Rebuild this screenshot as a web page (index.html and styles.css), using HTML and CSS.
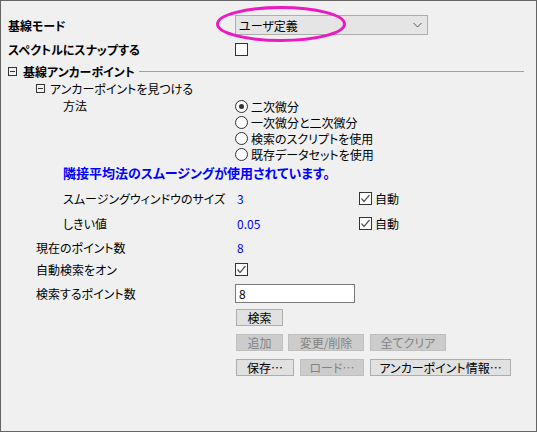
FILE: index.html
```html
<!DOCTYPE html>
<html lang="ja">
<head>
    <meta charset="UTF-8">
    <title>基線モード</title>
    <link rel="stylesheet" href="styles.css">
</head>
<body>
<div class="panel">
    <svg class="mark" width="140" height="44" viewBox="0 0 140 44">
        <ellipse cx="66" cy="20" rx="63.5" ry="16.5" fill="none" stroke="#ec1bc0" stroke-width="3"/>
    </svg>

    <div class="row r1">
        <div class="label bold">基線モード</div>
        <div class="val">
            <div class="combo">
                <span>ユーザ定義</span>
                <svg width="9" height="6" viewBox="0 0 9 6"><polyline points="0.5,1 4.5,5 8.5,1" fill="none" stroke="#555" stroke-width="1"/></svg>
            </div>
        </div>
    </div>
    <div class="row r2">
        <div class="label bold">スペクトルにスナップする</div>
        <div class="val"><span class="check"></span></div>
    </div>

    <div class="section">
        <span class="minus"></span>
        <span class="bold">基線アンカーポイント</span>
        <span class="rule"></span>
    </div>
    <div class="sub">
        <span class="minus"></span>
        <span>アンカーポイントを見つける</span>
    </div>

    <div class="row methods">
        <div class="label l2">方法</div>
        <div class="val radios">
            <div class="opt"><span class="radio on"></span>二次微分</div>
            <div class="opt"><span class="radio"></span>一次微分と二次微分</div>
            <div class="opt"><span class="radio"></span>検索のスクリプトを使用</div>
            <div class="opt"><span class="radio"></span>既存データセットを使用</div>
        </div>
    </div>

    <div class="note">隣接平均法のスムージングが使用されています。</div>

    <div class="row r-smooth">
        <div class="label l2">スムージングウィンドウのサイズ</div>
        <div class="val"><span class="num">3</span><span class="check on"><svg width="11" height="11" viewBox="0 0 11 11"><polyline points="1.5,5.5 4,8.5 9.5,2" fill="none" stroke="#555" stroke-width="1.2"/></svg></span><span class="auto">自動</span></div>
    </div>
    <div class="row r-thresh">
        <div class="label l2">しきい値</div>
        <div class="val"><span class="num">0.05</span><span class="check on"><svg width="11" height="11" viewBox="0 0 11 11"><polyline points="1.5,5.5 4,8.5 9.5,2" fill="none" stroke="#555" stroke-width="1.2"/></svg></span><span class="auto">自動</span></div>
    </div>
    <div class="row r-count">
        <div class="label l1">現在のポイント数</div>
        <div class="val"><span class="num">8</span></div>
    </div>
    <div class="row r-auto">
        <div class="label l1">自動検索をオン</div>
        <div class="val"><span class="check on"><svg width="11" height="11" viewBox="0 0 11 11"><polyline points="1.5,5.5 4,8.5 9.5,2" fill="none" stroke="#555" stroke-width="1.2"/></svg></span></div>
    </div>
    <div class="row r-find">
        <div class="label l1">検索するポイント数</div>
        <div class="val"><div class="field">8</div></div>
    </div>

    <div class="buttons">
        <div class="btnrow"><span class="btn w47">検索</span></div>
        <div class="btnrow">
            <span class="btn w47 off">追加</span>
            <span class="btn w76 off gap5">変更/削除</span>
            <span class="btn w76 off">全てクリア</span>
        </div>
        <div class="btnrow">
            <span class="btn w58">保存…</span>
            <span class="btn w64 off">ロード…</span>
            <span class="btn w141">アンカーポイント情報…</span>
        </div>
    </div>
</div>
</body>
</html>
```

FILE: styles.css
```css
body {
    margin: 0;
    padding: 0;
    font-family: "Noto Sans CJK JP", "Noto Sans", sans-serif;
    font-size: 12px;
    font-feature-settings: "palt";
    color: #000;
    background: #f0f0f0;
}
.panel {
    position: relative;
    width: 537px;
    height: 432px;
    box-sizing: border-box;
    border: 1px solid #646464;
    background: #f0f0f0;
    padding: 12px 12px 0 7px;
}
.mark {
    position: absolute;
    left: 214px;
    top: 3px;
}
.bold {
    font-weight: bold;
}
.row {
    display: grid;
    grid-template-columns: 227px 1fr;
    align-items: center;
}
.val {
    display: flex;
    align-items: center;
}
.l1 {
    padding-left: 28px;
}
.l2 {
    padding-left: 55px;
}
.r1 { height: 24px; }
.r2 { height: 24px; }
.combo {
    width: 193px;
    height: 20px;
    box-sizing: border-box;
    border: 1px solid #adadad;
    background: #e5e5e5;
    display: flex;
    align-items: center;
    justify-content: space-between;
    padding: 0 5px 0 3px;
}
.check {
    width: 13px;
    height: 13px;
    box-sizing: border-box;
    border: 1px solid #333;
    background: #fff;
    display: flex;
    align-items: center;
    justify-content: center;
}
.section {
    height: 20px;
    display: flex;
    align-items: center;
}
.minus {
    position: relative;
    width: 9px;
    height: 9px;
    box-sizing: border-box;
    border: 1px solid #333;
    margin-right: 6px;
}
.minus::after {
    content: "";
    position: absolute;
    left: 1px;
    right: 1px;
    top: 3px;
    height: 1px;
    background: #333;
}
.rule {
    flex: 1;
    height: 1px;
    background: #a0a0a0;
    margin-left: 4px;
}
.sub {
    height: 15px;
    display: flex;
    align-items: center;
    padding-left: 28px;
}
.sub .minus {
    margin-right: 5px;
}
.methods {
    margin-top: 2px;
    align-items: start;
}
.methods .label {
    line-height: 16px;
}
.radios {
    flex-direction: column;
    align-items: flex-start;
}
.opt {
    height: 16px;
    display: flex;
    align-items: center;
}
.radio {
    position: relative;
    width: 13px;
    height: 13px;
    box-sizing: border-box;
    border: 1px solid #333;
    border-radius: 50%;
    background: #fff;
    margin-right: 3px;
}
.radio.on::after {
    content: "";
    position: absolute;
    left: 3px;
    top: 3px;
    width: 5px;
    height: 5px;
    border-radius: 50%;
    background: #333;
}
.note {
    height: 22px;
    line-height: 22px;
    padding-left: 55px;
    color: #0000ff;
    font-weight: bold;
    font-size: 13px;
}
.r-smooth { height: 28px; }
.r-thresh { height: 22px; }
.r-count { height: 26px; }
.r-auto { height: 18px; }
.r-find { height: 30px; }
.num {
    color: #0000ff;
    padding-left: 2px;
    width: 122px;
}
.auto {
    margin-left: 3px;
}
.field {
    width: 120px;
    height: 19px;
    box-sizing: border-box;
    border: 1px solid #7a7a7a;
    background: #fff;
    padding-left: 3px;
    line-height: 17px;
}
.buttons {
    margin-top: 1px;
    padding-left: 228px;
    display: flex;
    flex-direction: column;
    gap: 8px;
}
.btnrow {
    display: flex;
    gap: 6px;
}
.btn {
    height: 17px;
    box-sizing: border-box;
    border: 1px solid #adadad;
    background: #e1e1e1;
    text-align: center;
    line-height: 15px;
}
.btn.off {
    background: #cccccc;
    border-color: #bfbfbf;
    color: #838383;
}
.gap5 { margin-left: -1px; }
.w47 { width: 47px; }
.w58 { width: 58px; }
.w64 { width: 64px; }
.w76 { width: 76px; }
.w141 { width: 141px; }
```
